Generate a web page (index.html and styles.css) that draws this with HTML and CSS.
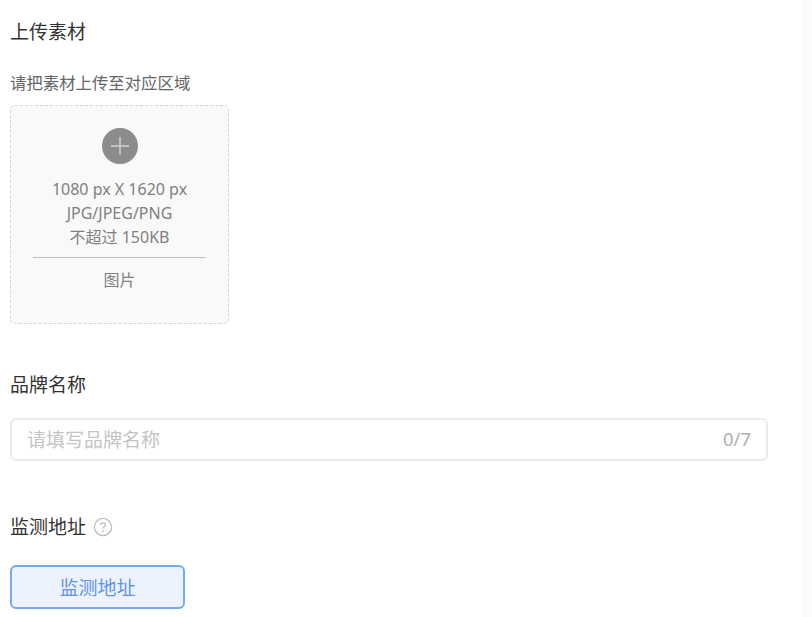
FILE: index.html
```html
<!DOCTYPE html>
<html lang="en">

<head>
    <meta charset="UTF-8">
    <meta name="viewport" content="width=device-width, initial-scale=1.0">
    <title>上传素材</title>
    <link rel="stylesheet" href="styles.css">
</head>

<body>
    <div class="page">
        <div class="form">
            <h3 class="title">上传素材</h3>
            <p class="hint">请把素材上传至对应区域</p>

            <!-- Upload box -->
            <div class="upload">
                <div class="plus">
                    <svg width="20" height="20" viewBox="0 0 20 20">
                        <path d="M10 1V19M1 10H19" stroke="#d4d4d4" stroke-width="1.4" fill="none" />
                    </svg>
                </div>
                <div class="spec">1080 px X 1620 px</div>
                <div class="spec">JPG/JPEG/PNG</div>
                <div class="spec">不超过 150KB</div>
                <div class="upload-name">图片</div>
            </div>

            <h3 class="title brand-title">品牌名称</h3>
            <div class="input-box">
                <span class="placeholder">请填写品牌名称</span>
                <span class="count">0/7</span>
            </div>

            <div class="title monitor-title">
                <span>监测地址</span>
                <svg class="help" width="20" height="20" viewBox="0 0 20 20">
                    <circle cx="10" cy="10" r="8.6" stroke="#bdbdbd" stroke-width="1.3" fill="none" />
                    <path d="M7.6 8C7.6 6.6 8.7 5.8 10 5.8C11.3 5.8 12.4 6.6 12.4 7.9C12.4 9.5 10 9.6 10 11.6" stroke="#bdbdbd" stroke-width="1.3" fill="none" />
                    <circle cx="10" cy="14" r="0.9" fill="#bdbdbd" />
                </svg>
            </div>
            <button type="button" class="btn-monitor">监测地址</button>
        </div>
        <div class="side"></div>
    </div>
</body>

</html>
```

FILE: styles.css
```css
html,
body {
    margin: 0;
    padding: 0;
    height: 100%;
    overflow: hidden;
}

body {
    font-family: "Noto Sans", "Noto Sans CJK SC", sans-serif;
    background-color: #fff;
}

.page {
    display: flex;
    height: 617px;
}

.form {
    flex: 1;
    padding: 20px 34px 0 10px;
}

.side {
    width: 10px;
    background-color: #fbfbfb;
}

.title {
    margin: 0;
    font-size: 19px;
    line-height: 24px;
    font-weight: 400;
    color: #333;
}

.hint {
    margin: 28px 0 0;
    font-size: 16.4px;
    line-height: 22px;
    color: #666;
}

.upload {
    box-sizing: border-box;
    width: 219px;
    height: 219px;
    margin-top: 11px;
    padding: 22px 22px 0;
    background-color: #f9f9f9;
    border: 1px dashed #d6d6d6;
    border-radius: 5px;
    text-align: center;
    color: #808080;
}

.plus {
    display: flex;
    align-items: center;
    justify-content: center;
    width: 36px;
    height: 36px;
    margin: 0 auto 13px;
    background-color: #8c8c8c;
    border-radius: 50%;
}

.spec {
    font-size: 16px;
    line-height: 24px;
}

.upload-name {
    margin-top: 8px;
    padding-top: 10px;
    border-top: 1px solid #bdbdbd;
    font-size: 16px;
    line-height: 24px;
}

.brand-title {
    margin-top: 49px;
}

.input-box {
    box-sizing: border-box;
    display: flex;
    align-items: center;
    justify-content: space-between;
    height: 43px;
    margin-top: 21px;
    padding: 0 15px 2px 15px;
    border: 2px solid #ebebeb;
    border-radius: 6px;
    font-size: 19px;
    color: #c4c4c4;
}

.count {
    font-size: 18.5px;
    color: #b0b0b0;
}

.monitor-title {
    display: flex;
    align-items: center;
    gap: 7px;
    margin-top: 54px;
}

.help {
    flex-shrink: 0;
}

.btn-monitor {
    display: block;
    width: 175px;
    height: 44px;
    margin-top: 26px;
    padding: 0;
    background-color: #ecf3fe;
    border: 2px solid #78aaf0;
    border-radius: 6px;
    font-family: inherit;
    font-size: 19px;
    color: #5f94ea;
    cursor: pointer;
}
```
